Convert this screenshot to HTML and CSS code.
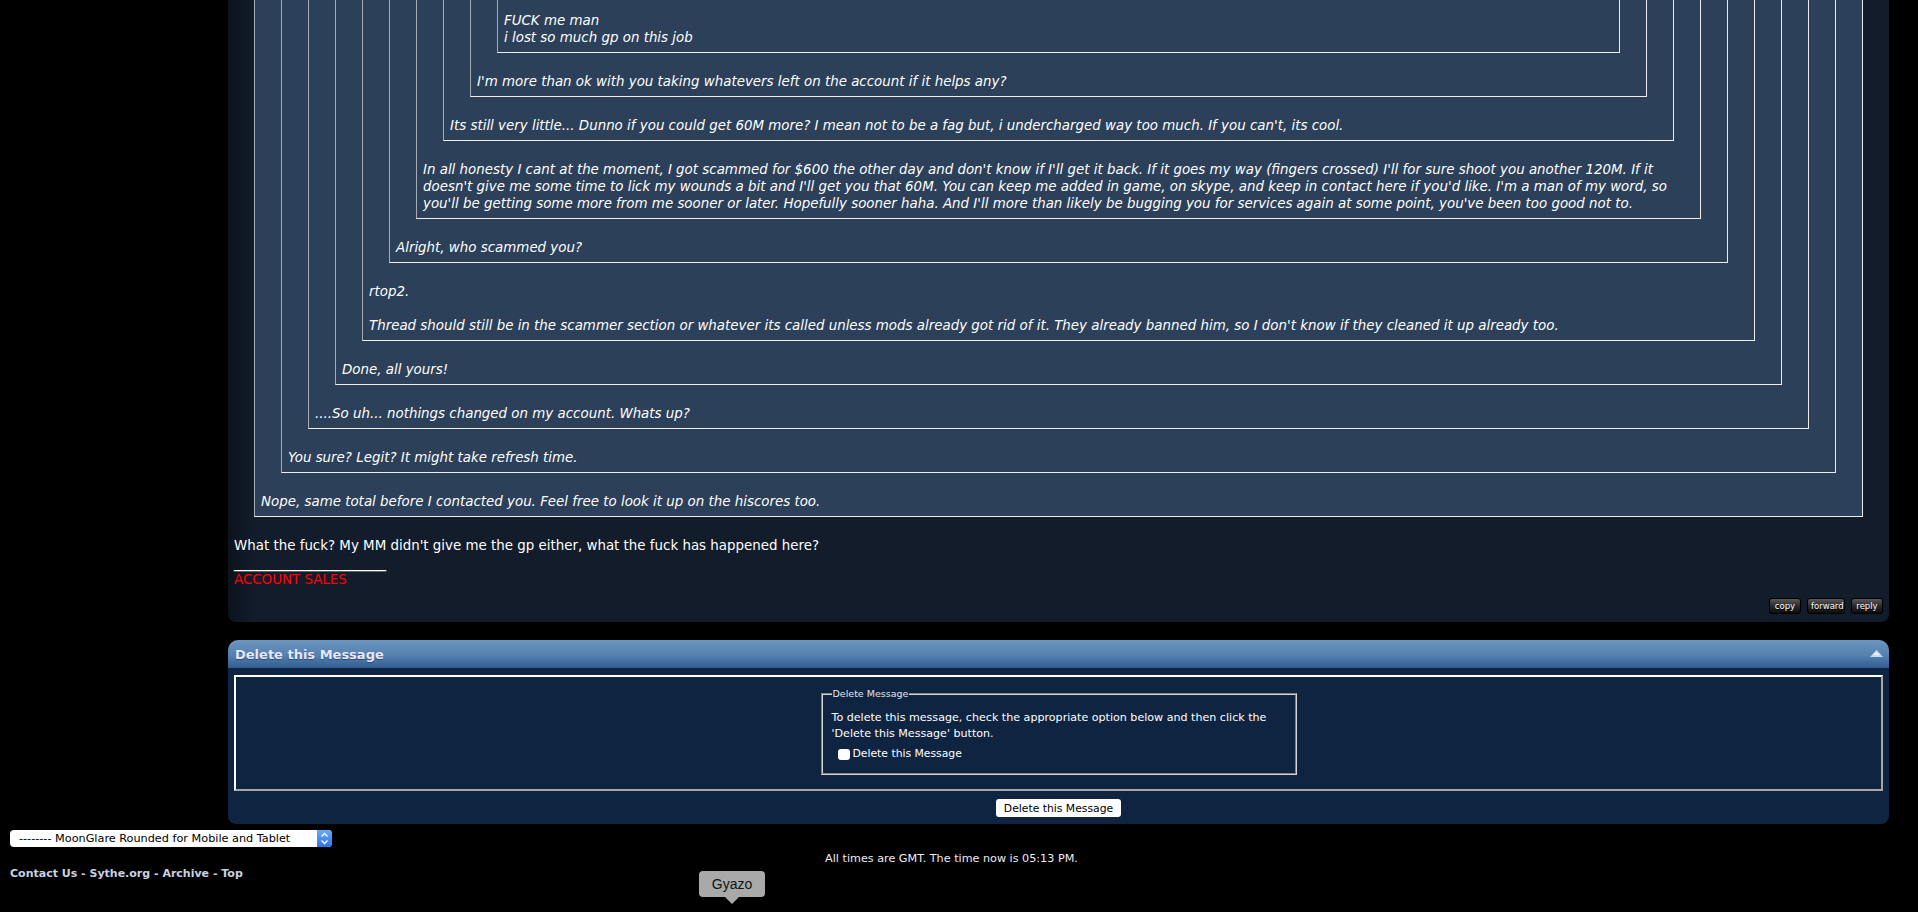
FILE: index.html
```html
<!DOCTYPE html>
<html lang="en">
<head>
    <meta charset="UTF-8">
    <title>Private Message</title>
    <link rel="stylesheet" href="styles.css">
</head>
<body>

<div class="page">

    <div class="post">
        <div class="post-message">
            <div class="quote">
                <div class="quote">
                    <div class="quote">
                        <div class="quote">
                            <div class="quote">
                                <div class="quote">
                                    <div class="quote">
                                        <div class="quote">
                                            <div class="quote">
                                                <div class="quote quote-top">
                                                    <div class="quote-text">FUCK me man<br>i lost so much gp on this job</div>
                                                </div>
                                                <div class="quote-text">I'm more than ok with you taking whatevers left on the account if it helps any?</div>
                                            </div>
                                            <div class="quote-text">Its still very little... Dunno if you could get 60M more? I mean not to be a fag but, i undercharged way too much. If you can't, its cool.</div>
                                        </div>
                                        <div class="quote-text">In all honesty I cant at the moment, I got scammed for $600 the other day and don't know if I'll get it back. If it goes my way (fingers crossed) I'll for sure shoot you another 120M. If it doesn't give me some time to lick my wounds a bit and I'll get you that 60M. You can keep me added in game, on skype, and keep in contact here if you'd like. I'm a man of my word, so you'll be getting some more from me sooner or later. Hopefully sooner haha. And I'll more than likely be bugging you for services again at some point, you've been too good not to.</div>
                                    </div>
                                    <div class="quote-text">Alright, who scammed you?</div>
                                </div>
                                <div class="quote-text">rtop2.<br><br>Thread should still be in the scammer section or whatever its called unless mods already got rid of it. They already banned him, so I don't know if they cleaned it up already too.</div>
                            </div>
                            <div class="quote-text">Done, all yours!</div>
                        </div>
                        <div class="quote-text">....So uh... nothings changed on my account. Whats up?</div>
                    </div>
                    <div class="quote-text">You sure? Legit? It might take refresh time.</div>
                </div>
                <div class="quote-text">Nope, same total before I contacted you. Feel free to look it up on the hiscores too.</div>
            </div>
            What the fuck? My MM didn't give me the gp either, what the fuck has happened here?
        </div>

        <div class="post-signature">
            <div class="sig-rule">__________________</div>
            <div class="sig-text">ACCOUNT SALES</div>
        </div>

        <div class="post-controls">
            <a class="post-btn btn-copy" href="#">copy</a>
            <a class="post-btn btn-forward" href="#">forward</a>
            <a class="post-btn btn-reply" href="#">reply</a>
        </div>
    </div>

    <div class="delete-box">
        <div class="delete-head">
            <span>Delete this Message</span>
            <svg class="collapse-icon" width="13" height="7" viewBox="0 0 13 7">
                <polygon points="0,7 6.5,0 13,7" fill="#c4daf1"/>
                <polygon points="3,5 6.5,1.5 10,5" fill="#e6f0fa"/>
            </svg>
        </div>
        <div class="delete-body">
            <div class="delete-panel">
                <fieldset class="delete-fieldset">
                    <legend>Delete Message</legend>
                    <div class="delete-info">To delete this message, check the appropriate option below and then click the 'Delete this Message' button.</div>
                    <label class="delete-check"><input type="checkbox" name="deletepm"> Delete this Message</label>
                </fieldset>
            </div>
            <div class="delete-submit">
                <button type="button" class="delete-button">Delete this Message</button>
            </div>
        </div>
    </div>

    <div class="footer">
        <div class="style-select">
            <select name="styleid">
                <option>-------- MoonGlare Rounded for Mobile and Tablet</option>
            </select>
            <span class="select-stepper">
                <svg width="15" height="17" viewBox="0 0 15 17">
                    <polyline points="4.5,6.5 7.5,3.5 10.5,6.5" fill="none" stroke="#fff" stroke-width="1.4"/>
                    <polyline points="4.5,10.5 7.5,13.5 10.5,10.5" fill="none" stroke="#fff" stroke-width="1.4"/>
                </svg>
            </span>
        </div>
        <div class="footer-time">All times are GMT. The time now is 05:13 PM.</div>
        <div class="footer-links">
            <a href="#">Contact Us</a> - <a href="#">Sythe.org</a> - <a href="#">Archive</a> - <a href="#">Top</a>
        </div>
    </div>

</div>

<div class="gyazo-tip">Gyazo</div>

</body>
</html>
```

FILE: styles.css
```css
body {
    margin: 0;
    background-color: #000;
    color: #fff;
    font-family: "DejaVu Sans", Verdana, sans-serif;
    font-size: 13.4px;
}

.page {
    padding-right: 15px;
}

/* post */

.post {
    margin: -98px 14px 0 228px;
    padding: 6px 6px 8px;
    background: linear-gradient(90deg, #0b131c 0, #121c2b 26px);
    border-radius: 0 0 8px 8px;
}

.post-message {
    line-height: 17px;
}

.quote {
    margin: 0 20px 20px;
    padding: 6px;
    background-color: #2c405a;
    border: 1px solid;
    border-color: #a7abb2 #eeeeee #eeeeee #a7abb2;
    font-style: italic;
}

.quote-top {
    padding-top: 40px;
}

.post-signature {
    line-height: 17px;
}

.sig-rule {
    font-size: 16.9px;
    line-height: 14px;
    height: 17px;
}

.sig-text {
    color: #ff0000;
}

.post-controls {
    display: flex;
    justify-content: flex-end;
    gap: 6px;
    margin-top: 10px;
}

.post-btn {
    display: block;
    height: 14px;
    line-height: 14px;
    padding: 0 3px;
    border: 1px solid #000;
    border-radius: 3px;
    background: linear-gradient(#5a5a5a, #2a2a2a 50%, #0d0d0d);
    color: #fff;
    font-size: 8.5px;
    text-align: center;
    text-decoration: none;
    text-shadow: 0 1px 0 #000;
}

.btn-copy { width: 24px; }
.btn-forward { width: 30px; }
.btn-reply { width: 24px; }

/* delete box */

.delete-box {
    margin: 18px 14px 0 228px;
    background-color: #0f2441;
    border-radius: 10px 10px 8px 8px;
}

.delete-head {
    height: 28px;
    padding: 0 6px 0 7px;
    display: flex;
    align-items: center;
    justify-content: space-between;
    background: linear-gradient(#6b96c2, #5580b0 55%, #3a6699 88%, #2f5a8e);
    border-radius: 10px 10px 0 0;
    color: #e8e8fa;
    font-size: 13px;
    font-weight: bold;
    text-shadow: 0 1px 1px #2a4a70;
}

.collapse-icon {
    margin-top: -2px;
}

.delete-body {
    padding: 7px 6px 7px;
}

.delete-panel {
    padding: 11px 0 14px;
    border: 2px solid;
    border-color: #ffffff #a6a6a6 #a6a6a6 #ffffff;
}

.delete-fieldset {
    width: 476px;
    box-sizing: border-box;
    margin: 0 auto;
    padding: 10px 8px 10px 9px;
    border: 2px groove #d6d6d6;
    font-size: 10.8px;
    line-height: 16px;
}

.delete-fieldset legend {
    padding: 0 1px;
    margin-left: 0;
    font-size: 9.5px;
    line-height: 12px;
    color: #e4e4e4;
}

.delete-info {
    font-size: 11.1px;
}

.delete-check {
    display: flex;
    align-items: center;
    gap: 3px;
    margin-top: 3px;
    padding-left: 6px;
    line-height: 18px;
}

.delete-check input {
    appearance: none;
    width: 12px;
    height: 11px;
    margin: 0;
    background-color: #fff;
    border-radius: 3px;
}

.delete-submit {
    display: flex;
    justify-content: center;
    margin-top: 8px;
}

.delete-button {
    height: 18px;
    padding: 0 8px;
    border: none;
    border-radius: 3px;
    background-color: #fff;
    color: #000;
    font-family: "DejaVu Sans", Verdana, sans-serif;
    font-size: 10.8px;
}

/* footer */

.footer {
    padding: 6px 10px 0;
}

.style-select {
    position: relative;
    width: 322px;
    height: 17px;
}

.style-select select {
    appearance: none;
    width: 100%;
    height: 17px;
    padding: 0 0 0 9px;
    border: none;
    border-radius: 4px;
    background-color: #fff;
    color: #000;
    font-family: "DejaVu Sans", Verdana, sans-serif;
    font-size: 11.25px;
}

.select-stepper {
    position: absolute;
    top: 0;
    right: 0;
    width: 15px;
    height: 17px;
    border-radius: 0 4px 4px 0;
    background: linear-gradient(#6aaaf8, #2f74e6);
}

.select-stepper svg {
    display: block;
}

.footer-time {
    margin-top: 5px;
    line-height: 14px;
    text-align: center;
    font-size: 11.2px;
    color: #ececf4;
}

.footer-links {
    margin-top: 1px;
    line-height: 14px;
    font-size: 11px;
    font-weight: bold;
    color: #c9d1e2;
}

.footer-links a {
    color: #c9d1e2;
    text-decoration: none;
}

/* gyazo tooltip */

.gyazo-tip {
    position: absolute;
    left: 699px;
    top: 871px;
    width: 66px;
    height: 26px;
    line-height: 26px;
    border-radius: 4px;
    background-color: #a9a9a9;
    color: #111;
    font-family: "Liberation Sans", Arial, sans-serif;
    font-size: 14px;
    text-align: center;
}

.gyazo-tip::after {
    content: "";
    position: absolute;
    left: 26px;
    top: 26px;
    border-left: 7px solid transparent;
    border-right: 7px solid transparent;
    border-top: 7px solid #a9a9a9;
}
```
